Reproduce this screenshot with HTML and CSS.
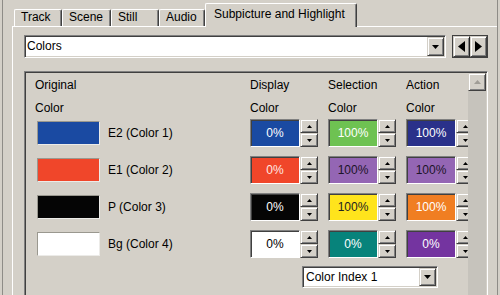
FILE: index.html
```html
<!DOCTYPE html>
<html>
<head>
<meta charset="utf-8">
<link rel="stylesheet" href="styles.css">
</head>
<body>
<div class="window">
  <div class="frame">
    <div class="tabctl">
      <div class="tabs">
        <div class="tab tab-track">Track</div>
        <div class="tab tab-scene">Scene</div>
        <div class="tab tab-still">Still</div>
        <div class="tab tab-audio">Audio</div>
        <div class="tab tab-active">Subpicture and Highlight</div>
      </div>
      <div class="panel">
        <div class="toolbar">
          <div class="combo combo-main">
            <span class="combo-text">Colors</span>
            <span class="btn combo-btn"><svg width="7" height="4" viewBox="0 0 7 4"><path d="M0 0H7L3.5 4z" fill="#000"/></svg></span>
          </div>
          <div class="navpair">
            <span class="btn navbtn navbtn-left"><svg width="7" height="11" viewBox="0 0 7 11"><path d="M7 0V11L0 5.5z" fill="#000"/></svg></span>
            <span class="btn navbtn"><svg width="7" height="11" viewBox="0 0 7 11"><path d="M0 0V11L7 5.5z" fill="#000"/></svg></span>
          </div>
        </div>
        <div class="listbox">
          <div class="list-content">
            <div class="hdr">
              <span>Original</span><span>Display</span><span>Selection</span><span>Action</span>
            </div>
            <div class="hdr">
              <span>Color</span><span>Color</span><span>Color</span><span>Color</span>
            </div>
            <div class="rows">
              <div class="row">
                <div class="orig"><span class="swatch c-blue"></span><span class="orig-label">E2 (Color 1)</span></div>
                <div class="val"><span class="vbox c-blue">0%</span><span class="spin"><span class="btn spin-btn"><svg width="5" height="3" viewBox="0 0 5 3"><path d="M2.5 0L5 3H0z" fill="#000"/></svg></span><span class="btn spin-btn"><svg width="5" height="3" viewBox="0 0 5 3"><path d="M0 0H5L2.5 3z" fill="#000"/></svg></span></span></div>
                <div class="val"><span class="vbox c-green">100%</span><span class="spin"><span class="btn spin-btn"><svg width="5" height="3" viewBox="0 0 5 3"><path d="M2.5 0L5 3H0z" fill="#000"/></svg></span><span class="btn spin-btn"><svg width="5" height="3" viewBox="0 0 5 3"><path d="M0 0H5L2.5 3z" fill="#000"/></svg></span></span></div>
                <div class="val"><span class="vbox c-navy">100%</span><span class="spin"><span class="btn spin-btn"><svg width="5" height="3" viewBox="0 0 5 3"><path d="M2.5 0L5 3H0z" fill="#000"/></svg></span><span class="btn spin-btn"><svg width="5" height="3" viewBox="0 0 5 3"><path d="M0 0H5L2.5 3z" fill="#000"/></svg></span></span></div>
              </div>
              <div class="row">
                <div class="orig"><span class="swatch c-red"></span><span class="orig-label">E1 (Color 2)</span></div>
                <div class="val"><span class="vbox c-red">0%</span><span class="spin"><span class="btn spin-btn"><svg width="5" height="3" viewBox="0 0 5 3"><path d="M2.5 0L5 3H0z" fill="#000"/></svg></span><span class="btn spin-btn"><svg width="5" height="3" viewBox="0 0 5 3"><path d="M0 0H5L2.5 3z" fill="#000"/></svg></span></span></div>
                <div class="val"><span class="vbox c-lilac">100%</span><span class="spin"><span class="btn spin-btn"><svg width="5" height="3" viewBox="0 0 5 3"><path d="M2.5 0L5 3H0z" fill="#000"/></svg></span><span class="btn spin-btn"><svg width="5" height="3" viewBox="0 0 5 3"><path d="M0 0H5L2.5 3z" fill="#000"/></svg></span></span></div>
                <div class="val"><span class="vbox c-lilac">100%</span><span class="spin"><span class="btn spin-btn"><svg width="5" height="3" viewBox="0 0 5 3"><path d="M2.5 0L5 3H0z" fill="#000"/></svg></span><span class="btn spin-btn"><svg width="5" height="3" viewBox="0 0 5 3"><path d="M0 0H5L2.5 3z" fill="#000"/></svg></span></span></div>
              </div>
              <div class="row">
                <div class="orig"><span class="swatch c-black"></span><span class="orig-label">P (Color 3)</span></div>
                <div class="val"><span class="vbox c-black">0%</span><span class="spin"><span class="btn spin-btn"><svg width="5" height="3" viewBox="0 0 5 3"><path d="M2.5 0L5 3H0z" fill="#000"/></svg></span><span class="btn spin-btn"><svg width="5" height="3" viewBox="0 0 5 3"><path d="M0 0H5L2.5 3z" fill="#000"/></svg></span></span></div>
                <div class="val"><span class="vbox c-yellow">100%</span><span class="spin"><span class="btn spin-btn"><svg width="5" height="3" viewBox="0 0 5 3"><path d="M2.5 0L5 3H0z" fill="#000"/></svg></span><span class="btn spin-btn"><svg width="5" height="3" viewBox="0 0 5 3"><path d="M0 0H5L2.5 3z" fill="#000"/></svg></span></span></div>
                <div class="val"><span class="vbox c-orange">100%</span><span class="spin"><span class="btn spin-btn"><svg width="5" height="3" viewBox="0 0 5 3"><path d="M2.5 0L5 3H0z" fill="#000"/></svg></span><span class="btn spin-btn"><svg width="5" height="3" viewBox="0 0 5 3"><path d="M0 0H5L2.5 3z" fill="#000"/></svg></span></span></div>
              </div>
              <div class="row">
                <div class="orig"><span class="swatch c-white"></span><span class="orig-label">Bg (Color 4)</span></div>
                <div class="val"><span class="vbox c-white">0%</span><span class="spin"><span class="btn spin-btn"><svg width="5" height="3" viewBox="0 0 5 3"><path d="M2.5 0L5 3H0z" fill="#000"/></svg></span><span class="btn spin-btn"><svg width="5" height="3" viewBox="0 0 5 3"><path d="M0 0H5L2.5 3z" fill="#000"/></svg></span></span></div>
                <div class="val"><span class="vbox c-teal">0%</span><span class="spin"><span class="btn spin-btn"><svg width="5" height="3" viewBox="0 0 5 3"><path d="M2.5 0L5 3H0z" fill="#000"/></svg></span><span class="btn spin-btn"><svg width="5" height="3" viewBox="0 0 5 3"><path d="M0 0H5L2.5 3z" fill="#000"/></svg></span></span></div>
                <div class="val"><span class="vbox c-purple">0%</span><span class="spin"><span class="btn spin-btn"><svg width="5" height="3" viewBox="0 0 5 3"><path d="M2.5 0L5 3H0z" fill="#000"/></svg></span><span class="btn spin-btn"><svg width="5" height="3" viewBox="0 0 5 3"><path d="M0 0H5L2.5 3z" fill="#000"/></svg></span></span></div>
              </div>
            </div>
            <div class="footer">
              <div class="combo combo-index">
                <span class="combo-text">Color Index 1</span>
                <span class="btn combo-btn"><svg width="7" height="4" viewBox="0 0 7 4"><path d="M0 0H7L3.5 4z" fill="#000"/></svg></span>
              </div>
            </div>
          </div>
          <div class="vscroll">
            <span class="btn sb-up"><svg width="7" height="4" viewBox="0 0 7 4"><path d="M3.5 0L7 4H0z" fill="#a09d96"/></svg></span>
            <span class="sb-track"></span>
          </div>
        </div>
      </div>
    </div>
  </div>
</div>
</body>
</html>
```
FILE: styles.css
```css
html, body {
  margin: 0;
  padding: 0;
  background: #d4d0c8;
}
body {
  font-family: "Liberation Sans", Arial, sans-serif;
  font-size: 12px;
  color: #000;
}
.window {
  width: 500px;
  height: 295px;
  overflow: hidden;
}
.frame {
  box-sizing: border-box;
  margin-left: 2px;
  width: 496px;
  height: 295px;
  border-left: 1px solid #8e8c87;
  border-right: 1px solid #8e8c87;
  padding-left: 9px;
}
.tabctl {
  width: 485px;
}
.tabs {
  display: flex;
  align-items: flex-end;
  height: 26px;
  padding-left: 2px;
}
.tab {
  box-sizing: border-box;
  height: 17px;
  background: #d4d0c8;
  border-top: 1px solid #fff;
  border-left: 1px solid #fff;
  border-right: 1px solid #404040;
  box-shadow: inset -1px 0 #808080;
  border-radius: 2px 2px 0 0;
  padding-left: 6px;
  line-height: 14px;
  white-space: nowrap;
}
.tab-track { width: 48px; }
.tab-scene { width: 49px; }
.tab-still { width: 48px; }
.tab-audio { width: 46px; }
.tab-active {
  width: 152px;
  height: 24px;
  margin-bottom: -1px;
  padding-top: 2px;
  padding-left: 8px;
  line-height: 17px;
  position: relative;
  z-index: 1;
}
.panel {
  box-sizing: border-box;
  height: 269px;
  border-top: 1px solid #fff;
  border-left: 1px solid #fff;
  padding: 8px 0 0 11px;
}
.toolbar {
  display: flex;
  height: 23px;
}
.btn {
  box-sizing: border-box;
  display: flex;
  align-items: center;
  justify-content: center;
  background: #d4d0c8;
  border: 1px solid;
  border-color: #d4d0c8 #404040 #404040 #d4d0c8;
  box-shadow: inset 1px 1px #fff, inset -1px -1px #808080;
}
.combo {
  box-sizing: border-box;
  display: flex;
  background: #fff;
  border: 1px solid;
  border-color: #808080 #fff #fff #808080;
  box-shadow: inset 1px 1px #404040, inset -1px -1px #d4d0c8;
  padding: 1px;
}
.combo-main {
  width: 422px;
  height: 23px;
}
.combo-text {
  flex: 1;
  padding-left: 1px;
  line-height: 19px;
  white-space: nowrap;
}
.combo-btn {
  width: 17px;
}
.navpair {
  box-sizing: border-box;
  display: flex;
  margin-left: 6px;
  width: 36px;
  height: 23px;
  border: 1px solid #404040;
}
.navbtn {
  flex: 1;
}
.navbtn-left {
  border-right: 1px solid #202020;
}
.listbox {
  box-sizing: border-box;
  display: flex;
  margin-top: 13px;
  width: 464px;
  height: 240px;
  border: 1px solid;
  border-color: #808080 #fff #fff #808080;
  box-shadow: inset 1px 1px #404040, inset -1px -1px #d4d0c8;
  padding: 1px 1px 0 1px;
}
.list-content {
  flex: 1;
  overflow: hidden;
  padding: 5px 0 0 9px;
  display: flex;
  flex-direction: column;
}
.hdr, .row {
  display: grid;
  grid-template-columns: 215px 78px 78px 78px;
  white-space: nowrap;
}
.hdr {
  height: 14px;
  line-height: 14px;
}
.hdr + .hdr {
  margin-top: 9px;
}
.rows {
  margin-top: 4px;
  display: flex;
  flex-direction: column;
  gap: 9px;
}
.row {
  height: 28px;
  align-items: center;
}
.orig {
  display: flex;
  align-items: center;
}
.swatch {
  box-sizing: border-box;
  margin-left: 2px;
  width: 63px;
  height: 24px;
  border: 1px solid;
  border-color: #9a988f #ecebe8 #ecebe8 #9a988f;
}
.orig-label {
  margin-left: 8px;
}
.val {
  display: flex;
  height: 28px;
}
.vbox {
  box-sizing: border-box;
  width: 50px;
  height: 28px;
  display: flex;
  align-items: center;
  justify-content: center;
  border: 1px solid;
  border-color: #808080 #fff #fff #808080;
  box-shadow: inset 1px 1px #404040;
  color: #fff;
}
.spin {
  display: flex;
  flex-direction: column;
  width: 18px;
}
.spin-btn {
  height: 14px;
}
.c-blue { background: #1a4aa2; }
.c-red { background: #f0462a; color: #ffe8e2; }
.c-black { background: #050505; }
.c-white { background: #fff; color: #000; }
.c-green { background: #6ec252; }
.c-lilac { background: #9466b4; color: #1c1428; }
.c-yellow { background: #ffe41c; color: #222; }
.c-teal { background: #07837b; }
.c-navy { background: #2a318a; }
.c-orange { background: #f07e22; }
.c-purple { background: #7434a0; }
.footer {
  margin-top: 8px;
  padding-left: 267px;
}
.combo-index {
  width: 136px;
  height: 22px;
}
.combo-index .combo-text {
  line-height: 18px;
  padding-left: 2px;
}
.vscroll {
  width: 18px;
  display: flex;
  flex-direction: column;
}
.sb-up {
  height: 18px;
}
.sb-track {
  flex: 1;
  background: #c6c3bc;
}
```
